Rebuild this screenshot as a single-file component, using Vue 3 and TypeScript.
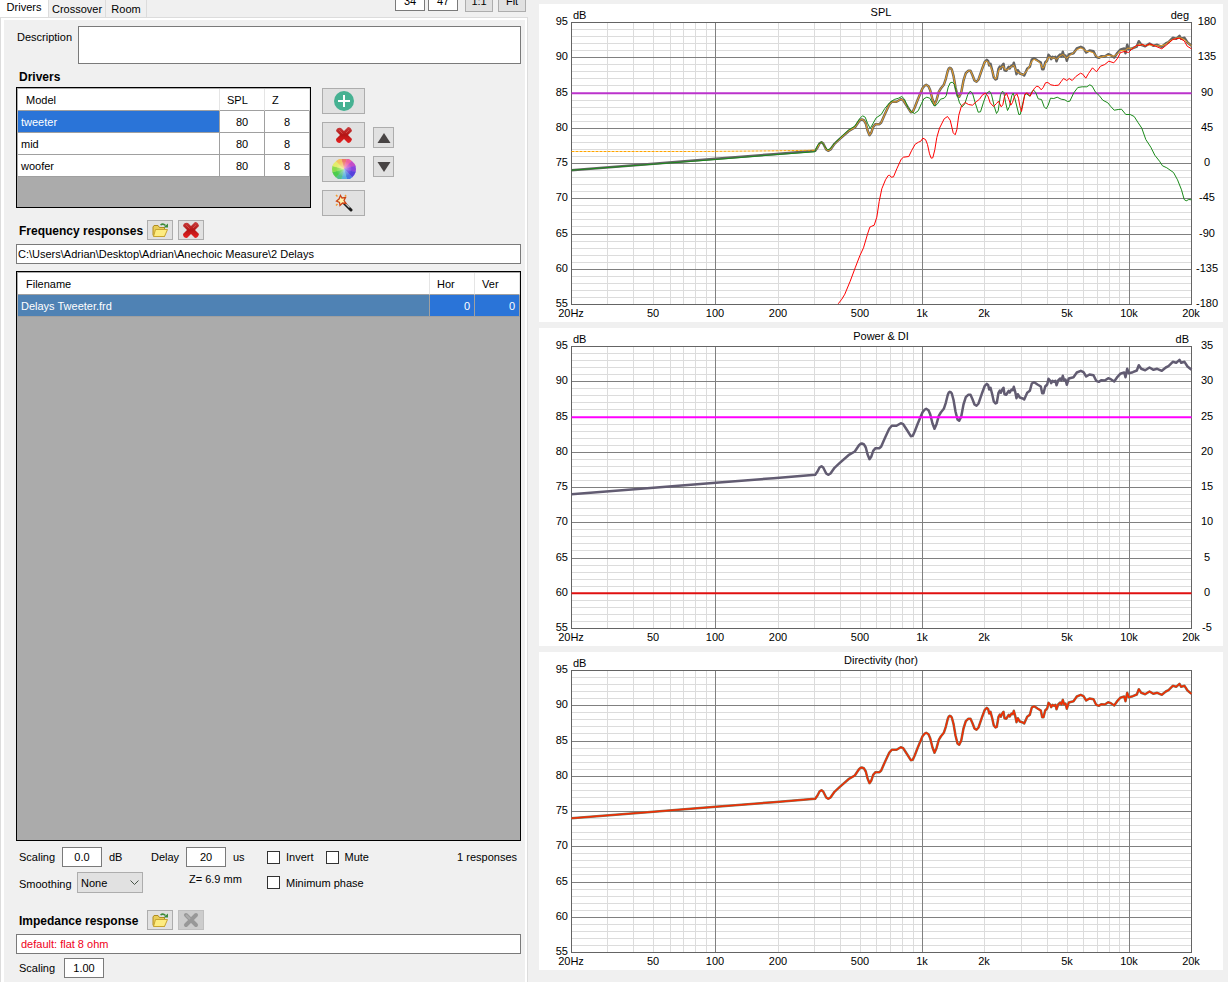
<script setup lang="ts">
import { computed, onBeforeUnmount, onMounted, ref } from 'vue'

interface Point { x: number; y: number }
interface Trace { points: Point[]; color: string; width: number; dash?: string }
interface Chart {
  title: string
  leftUnit: string
  rightUnit: string
  rightLabels: string[]
  traces: Trace[]
}

const tabs = ['Drivers', 'Crossover', 'Room']
const drivers = [
  { model: 'tweeter', spl: 80, z: 8 },
  { model: 'mid', spl: 80, z: 8 },
  { model: 'woofer', spl: 80, z: 8 },
]
const responses = [{ filename: 'Delays Tweeter.frd', hor: 0, ver: 0 }]

const selectedDriver = ref(0)
const zoomWidth = ref('34')
const zoomHeight = ref('47')
const description = ref('')
const folder = ref('C:\\Users\\Adrian\\Desktop\\Adrian\\Anechoic Measure\\2 Delays')
const scaling = ref('0.0')
const delay = ref('20')
const smoothing = ref('None')
const invert = ref(false)
const mute = ref(false)
const minimumPhase = ref(false)
const impedance = ref('default: flat 8 ohm')
const impedanceScaling = ref('1.00')

// Traces are sampled on a fixed raster that spans 20 Hz..20 kHz and 95..55 dB.
const RASTER_WIDTH = 1860
const RASTER_HEIGHT = 846

function samples(originX: number, originY: number, text: string): Point[] {
  return text.trim().split(/\s+/).map((pair) => {
    const [x, y] = pair.split(',').map(Number)
    return { x: (x + originX) / RASTER_WIDTH, y: (y - originY) / RASTER_HEIGHT }
  })
}

const level = (y: number): Point[] => [{ x: 0, y }, { x: 1, y }]

const rise = samples(626, 61, `
105,446 112,436 118,424 124,420 129,424 138,442 144,446 151,442 163,425 178,411 205,387 224,376
236,358 241,353 245,352 251,354 257,364 262,384 268,399 273,392 279,374 286,366 298,366 303,361
314,336 327,308 335,299 349,299 362,291 369,294 380,311 392,330 398,329 404,315 413,292 427,258
434,250 438,248 445,252 450,264 457,292 463,308 469,294 476,269 482,259 491,248 497,230 503,206
506,199 509,197 512,198 515,202 520,221 526,256 532,280 537,284 543,272 550,235 557,213 564,206
571,206 577,219 583,235 589,239 595,232 605,203 614,179 620,173 624,177 627,190 631,185 636,204
641,226 646,232 650,230 655,200 659,193 662,200 666,190 670,185 673,204 678,206 686,194 689,199
694,190 698,192 701,182 705,197 709,216 713,204 719,214 728,217 732,220 741,200 749,194 755,172
762,168 772,175 782,181 786,201 790,201 795,181 801,175 805,158 810,164 813,171 817,164 822,167
826,164 829,177 834,163 840,157 844,163 848,149 852,163 856,160 860,176 866,157 880,153 890,139
902,134 910,138 918,151 928,145 940,147 948,164 956,167 964,162 974,163 984,156 992,159 1002,166
1012,152 1020,143 1032,139 1036,153 1041,128 1046,141 1058,138 1070,133 1076,117 1083,128
1095,132 1108,124 1120,131 1131,128 1145,134 1157,124 1165,120 1178,107 1188,110 1198,101
1203,110 1213,107 1222,121 1234,131`)

const total: Point[] = [...samples(0, 0, '0,443 246,424 433,409 606,395'), ...rise]

// The smoothed sum drops the fine ripple above 2 kHz.
const rippleStart = 1245 / RASTER_WIDTH
const smoothed: Point[] = rise.map((p, i) => {
  if (p.x < rippleStart || i === rise.length - 1) return p
  return { x: p.x, y: (rise[i - 1].y + p.y * 2 + rise[i + 1].y) / 4 + 1 / RASTER_HEIGHT }
})
const flatBass = samples(0, 0, '0,387 400,387 620,385 731,383')

const midband: Point[] = [
  ...samples(0, 0, '0,443 246,425 433,411 606,397'),
  ...samples(686, 8, `
44,396 53,375 64,366 73,379 82,390 90,387 103,370 120,354 146,330 165,318 178,297 187,288 195,292
202,310 210,326 219,310 228,294 243,284 254,266 268,249 282,239 295,235 305,230 313,238 323,262
334,276 343,281 354,273 364,251 371,237 380,232 389,235 398,252 404,259 412,252 421,238 432,235
438,228 444,202 450,189 456,187 463,194 469,218 478,249 486,261 494,252 503,224 510,214 517,220
526,252 534,277 541,276 550,247 560,220 568,214 574,224 582,259 589,281 594,273 601,225 607,214
611,218 616,247 622,272 628,260 635,227 639,220 645,240 656,284`),
  ...samples(1226, 67, `
120,343 125,322 134,284 139,281 149,288 156,273 161,270 167,278 174,296 184,298 192,320 198,326
204,315 211,294 221,295 231,291 243,297 254,299 262,304 269,303 281,278 293,262 306,260 320,260
329,254 336,258 346,276 357,286 368,300 383,308 392,319 402,330 414,328 424,327 437,343 450,343
462,349 473,366 485,384 497,418 512,441 524,465 538,483 547,497 560,503 580,517 592,539 604,569
612,598 618,602 626,598 634,599`),
]

const treble: Point[] = [
  ...samples(686, 8, `
114,852 125,838 134,823 150,784 165,744 179,708 190,684 202,643 209,622 215,619 222,616 230,592
237,545 245,507 256,480 264,467 268,466 273,472 280,471 290,447 303,418 310,412 326,410 334,393
345,373 355,367 362,364 368,355 376,359 382,374 388,402 393,415 398,414 404,390 410,353 418,325
432,297 442,290 450,301 459,339 465,345 470,330 476,286 484,258 495,248 505,254 517,256 528,246
538,238 546,226 555,220 563,228 570,249 580,260 589,251 595,244 603,261 608,255 613,230 619,220
626,238 632,256 637,248 643,229 650,222 655,235 659,258`),
  ...samples(1226, 67, `
121,325 124,334 129,309 134,282 141,278 150,288 157,274 163,264 170,258 176,260 183,269 189,262
196,248 203,247 212,254 223,256 235,255 243,244 250,235 260,241 267,235 276,241 287,229 301,219
308,222 317,234 325,220 337,203 349,215 361,198 374,193 386,183 401,188 411,176 421,157 434,154
445,157 455,147 470,135 480,136 486,132 495,138 509,131 526,138 545,146 560,134 578,118 597,114
612,122 621,138 634,146`),
]

const charts: Chart[] = [
  {
    title: 'SPL', leftUnit: 'dB', rightUnit: 'deg',
    rightLabels: ['180', '135', '90', '45', '0', '-45', '-90', '-135', '-180'],
    traces: [
      { points: total, color: '#646464', width: 2.5 },
      { points: flatBass, color: '#ffa500', width: 1, dash: '3 1' },
      { points: smoothed, color: '#f0a020', width: 1 },
      { points: level(0.251), color: '#bb33cc', width: 2 },
      { points: midband, color: '#1a8a1a', width: 1 },
      { points: treble, color: '#ff0000', width: 1 },
    ],
  },
  {
    title: 'Power & DI', leftUnit: 'dB', rightUnit: 'dB',
    rightLabels: ['35', '30', '25', '20', '15', '10', '5', '0', '-5'],
    traces: [
      { points: total, color: '#625c72', width: 2.5 },
      { points: level(0.251), color: '#ff00ff', width: 2 },
      { points: level(0.875), color: '#e01010', width: 2 },
    ],
  },
  {
    title: 'Directivity (hor)', leftUnit: 'dB', rightUnit: '', rightLabels: [],
    traces: [
      { points: total, color: '#7c7860', width: 2.5 },
      { points: total, color: '#f42c00', width: 1.5 },
    ],
  },
]

const chartColumn = ref<HTMLElement | null>(null)
const panelWidth = ref(684)
const panelHeight = ref(318)
const GAP = 6
let observer: ResizeObserver | undefined

function measure() {
  const el = chartColumn.value
  if (!el) return
  panelWidth.value = Math.max(240, Math.floor(el.clientWidth))
  panelHeight.value = Math.max(160, Math.floor((el.clientHeight - GAP * 2) / 3))
}

onMounted(() => {
  measure()
  observer = new ResizeObserver(measure)
  if (chartColumn.value) observer.observe(chartColumn.value)
})
onBeforeUnmount(() => observer?.disconnect())

const left = 32
const top = 18
const plotWidth = computed(() => panelWidth.value - 64)
const plotHeight = computed(() => panelHeight.value - 36)
const right = computed(() => left + plotWidth.value)
const bottom = computed(() => top + plotHeight.value)

const freqX = (f: number) => left + Math.round((Math.log10(f / 20) / 3) * plotWidth.value)
const dbY = (db: number) => top + Math.round(((95 - db) / 40) * plotHeight.value)

const minorGrid = computed(() => {
  let d = ''
  for (const decade of [10, 100, 1000, 10000]) {
    for (let n = 2; n < 10; n++) {
      const f = n * decade
      if (f > 20 && f < 20000) d += `M${freqX(f) + 0.5} ${top}V${bottom.value}`
    }
  }
  for (let db = 56; db < 95; db++) {
    if (db % 5) d += `M${left} ${dbY(db) + 0.5}H${right.value}`
  }
  return d
})
const majorGrid = computed(() => {
  let d = ''
  for (const f of [100, 1000, 10000]) d += `M${freqX(f) + 0.5} ${top}V${bottom.value}`
  for (let db = 60; db < 95; db += 5) d += `M${left} ${dbY(db) + 0.5}H${right.value}`
  return d
})
const levels = [95, 90, 85, 80, 75, 70, 65, 60, 55]
const frequencies = [
  { f: 20, text: '20Hz' }, { f: 50, text: '50' }, { f: 100, text: '100' }, { f: 200, text: '200' },
  { f: 500, text: '500' }, { f: 1000, text: '1k' }, { f: 2000, text: '2k' }, { f: 5000, text: '5k' },
  { f: 10000, text: '10k' }, { f: 20000, text: '20k' },
]

function line(points: Point[]) {
  return points
    .map((p) => `${(left + 0.5 + p.x * plotWidth.value).toFixed(1)},${(top + 0.5 + p.y * plotHeight.value).toFixed(1)}`)
    .join(' ')
}

const wheelColors = [
  '#ee7a68', '#ee62a0', '#c44cc8', '#8a44dc', '#5640dc', '#4a78e0',
  '#58b4dc', '#54c08c', '#4ccc4c', '#8cdc4c', '#e4ec6c', '#f4c460',
]
const wheel = wheelColors.map((color, i) => {
  const a = ((i * 30 - 105) * Math.PI) / 180
  const b = ((i * 30 - 75) * Math.PI) / 180
  return {
    color,
    d: `M12 11L${12 + 13 * Math.cos(a)} ${11 + 13 * Math.sin(a)}L${12 + 13 * Math.cos(b)} ${11 + 13 * Math.sin(b)}Z`,
  }
})
</script>

<template>
  <main class="app">
    <section class="editor">
      <header class="topbar">
        <nav class="tabs" role="tablist" aria-label="Sections">
          <button
            v-for="(tab, i) in tabs" :key="tab" type="button" role="tab" class="tab"
            :class="{ active: i === 0 }" :aria-selected="i === 0"
          >{{ tab }}</button>
        </nav>
        <div class="view-tools">
          <input v-model="zoomWidth" class="number small" aria-label="Horizontal view size">
          <input v-model="zoomHeight" class="number small" aria-label="Vertical view size">
          <button type="button" class="button view-button">1:1</button>
          <button type="button" class="button view-button">Fit</button>
        </div>
      </header>

      <div class="page">
        <div class="description">
          <label for="description">Description</label>
          <textarea id="description" v-model="description"></textarea>
        </div>

        <h2 class="heading drivers-heading">Drivers</h2>
        <div class="drivers">
          <div class="grid-box drivers-box">
            <table class="grid">
              <colgroup><col><col class="num-col"><col class="num-col"></colgroup>
              <thead><tr><th>Model</th><th>SPL</th><th>Z</th></tr></thead>
              <tbody>
                <tr v-for="(d, i) in drivers" :key="d.model" @click="selectedDriver = i">
                  <td :class="{ selected: i === selectedDriver }">{{ d.model }}</td>
                  <td class="center">{{ d.spl }}</td>
                  <td class="center">{{ d.z }}</td>
                </tr>
              </tbody>
            </table>
          </div>
          <div class="tools">
            <button type="button" class="button tool" aria-label="Add driver">
              <svg width="20" height="20" viewBox="0 0 20 20">
                <circle cx="10" cy="10" r="10" fill="#46b192" />
                <path d="M4 10H16M10 4V16" stroke="#fff" stroke-width="2" />
              </svg>
            </button>
            <button type="button" class="button tool" aria-label="Remove driver">
              <svg width="16" height="16" viewBox="0 0 16 16"><use href="#cross" /></svg>
            </button>
            <button type="button" class="button tool" aria-label="Driver colour">
              <svg width="24" height="22" viewBox="0 0 24 22">
                <defs>
                  <clipPath id="wheel-clip"><path d="M7 1H17Q24 5 24 11Q24 17 18 21H6Q0 17 0 11Q0 5 7 1Z" /></clipPath>
                  <radialGradient id="wheel-light"><stop offset="0" stop-color="#fff" stop-opacity=".5" /><stop offset="1" stop-color="#fff" stop-opacity="0" /></radialGradient>
                </defs>
                <g clip-path="url(#wheel-clip)">
                  <path v-for="s in wheel" :key="s.color" :d="s.d" :fill="s.color" :stroke="s.color" stroke-width=".5" />
                  <circle cx="12" cy="11" r="8" fill="url(#wheel-light)" />
                </g>
              </svg>
            </button>
            <button type="button" class="button tool" aria-label="Driver wizard">
              <svg width="18" height="18" viewBox="0 0 18 18">
                <path d="M8 8L16 16" stroke="#1c1c1c" stroke-width="3" stroke-linecap="round" />
                <path d="M9 8L14.500 13.500" stroke="#c4c4c4" stroke-width="1.200" />
                <path d="M5.500 1.500L7 4L10.500 3.500L9 6.500L11 9.500L7.500 9L5 11.500L4.500 8.500L1.500 7L4 5Z" fill="#fff4b0" stroke="#cc4418" stroke-width="1.300" />
                <path d="M1 1l1.500 1.500M11 1l-1 1.500M1 11.500l1.500-1.500" stroke="#f09a30" stroke-width="1.500" />
              </svg>
            </button>
          </div>
          <div class="movers">
            <button type="button" class="button mover" aria-label="Move up">
              <svg width="14" height="12" viewBox="0 0 14 12"><path d="M7 1L13.500 11H.5Z" fill="#484444" /></svg>
            </button>
            <button type="button" class="button mover" aria-label="Move down">
              <svg width="14" height="12" viewBox="0 0 14 12"><path d="M.5 1H13.500L7 11Z" fill="#484444" /></svg>
            </button>
          </div>
        </div>

        <div class="section-head">
          <h2 class="heading">Frequency responses</h2>
          <button type="button" class="button file" aria-label="Open responses">
            <svg width="17" height="15" viewBox="0 0 17 15"><use href="#folder" /></svg>
          </button>
          <button type="button" class="button file" aria-label="Remove responses">
            <svg width="16" height="16" viewBox="0 0 16 16"><use href="#cross" /></svg>
          </button>
        </div>
        <input v-model="folder" class="text-line" aria-label="Response folder">

        <div class="grid-box responses-box">
          <table class="grid">
            <colgroup><col><col class="num-col"><col class="num-col"></colgroup>
            <thead><tr><th>Filename</th><th>Hor</th><th>Ver</th></tr></thead>
            <tbody>
              <tr v-for="r in responses" :key="r.filename">
                <td class="file-cell">{{ r.filename }}</td>
                <td class="selected end">{{ r.hor }}</td>
                <td class="selected end">{{ r.ver }}</td>
              </tr>
            </tbody>
          </table>
        </div>

        <div class="controls">
          <div class="group-a">
            <label class="scaling-label" for="scaling">Scaling</label>
            <input id="scaling" v-model="scaling" class="number">
            <span class="unit">dB</span>
          </div>
          <div class="group-b">
            <label class="delay-label" for="delay">Delay</label>
            <input id="delay" v-model="delay" class="number">
            <span class="unit">us</span>
          </div>
          <div class="group-c">
            <label class="check"><input v-model="invert" type="checkbox">Invert</label>
            <label class="check"><input v-model="mute" type="checkbox">Mute</label>
          </div>
          <span class="count">1 responses</span>
        </div>
        <div class="controls second">
          <div class="group-a">
            <label class="smoothing-label" for="smoothing">Smoothing</label>
            <span class="select">
              <select id="smoothing" v-model="smoothing"><option>None</option><option>1/12</option><option>1/6</option></select>
              <svg width="9" height="6" viewBox="0 0 9 6"><path d="M.5 .5L4.500 4.500L8.500 .5" fill="none" stroke="#485448" /></svg>
            </span>
          </div>
          <div class="group-b offset">Z= 6.9 mm</div>
          <div class="group-c">
            <label class="check"><input v-model="minimumPhase" type="checkbox">Minimum phase</label>
          </div>
        </div>

        <div class="section-head">
          <h2 class="heading">Impedance response</h2>
          <button type="button" class="button file" aria-label="Open impedance">
            <svg width="17" height="15" viewBox="0 0 17 15"><use href="#folder" /></svg>
          </button>
          <button type="button" class="button file" aria-label="Remove impedance" disabled>
            <svg width="16" height="16" viewBox="0 0 16 16">
              <path d="M3 3L13 13M13 3L3 13" stroke="#989898" stroke-width="4" stroke-linecap="round" />
              <path d="M3 3L7 7" stroke="#acacac" stroke-width="2" />
            </svg>
          </button>
        </div>
        <input v-model="impedance" class="text-line warning" aria-label="Impedance file">
        <div class="impedance-scale">
          <label for="impedance-scaling">Scaling</label>
          <input id="impedance-scaling" v-model="impedanceScaling" class="number">
        </div>
      </div>
    </section>

    <section ref="chartColumn" class="charts">
      <svg
        v-for="chart in charts" :key="chart.title" class="chart" role="img" :aria-label="chart.title"
        :width="panelWidth" :height="panelHeight"
      >
        <path class="minor" :d="minorGrid" />
        <path class="major" :d="majorGrid" />
        <rect class="frame" :x="left + 0.5" :y="top + 0.5" :width="plotWidth" :height="plotHeight" />
        <polyline
          v-for="(t, i) in chart.traces" :key="i" class="trace" :points="line(t.points)"
          :stroke="t.color" :stroke-width="t.width" :stroke-dasharray="t.dash"
        />
        <text :x="panelWidth / 2" y="12" text-anchor="middle">{{ chart.title }}</text>
        <text :x="left + 2" :y="top - 3">{{ chart.leftUnit }}</text>
        <text :x="right - 2" :y="top - 3" text-anchor="end">{{ chart.rightUnit }}</text>
        <text v-for="db in levels" :key="db" :x="left - 3" :y="dbY(db) + 3" text-anchor="end">{{ db }}</text>
        <text
          v-for="(label, i) in chart.rightLabels" :key="label" :x="right + 16" :y="dbY(levels[i]) + 3"
          text-anchor="middle"
        >{{ label }}</text>
        <text
          v-for="tick in frequencies" :key="tick.f" :x="freqX(tick.f)" :y="bottom + 13" text-anchor="middle"
        >{{ tick.text }}</text>
      </svg>
    </section>

    <svg class="symbols" aria-hidden="true">
      <defs>
        <linearGradient id="red" x1="0" y1="0" x2="0" y2="1">
          <stop offset="0" stop-color="#c84040" /><stop offset=".5" stop-color="#b41414" /><stop offset="1" stop-color="#e82020" />
        </linearGradient>
      </defs>
      <symbol id="cross" viewBox="0 0 16 16">
        <path d="M0 4Q1 0 5 1L8 4L12 0Q15 0 16 4L12 8L16 12Q15 16 12 16L8 12L4 16Q0 16 0 12L4 8Z" fill="url(#red)" />
        <path d="M3 3L6.500 6.500M13 3L10 6" stroke="#d04c48" stroke-width="1" fill="none" />
      </symbol>
      <symbol id="folder" viewBox="0 0 17 15">
        <path d="M1 4L2 2.500H6L7.500 4.500H12.500V13.500H2L1 12Z" fill="#e8cc58" stroke="#b08c20" />
        <path d="M3.500 6.500H15.500L12.500 13.500H1.500Z" fill="#fdec80" stroke="#c8a430" />
        <path d="M8.500 2Q11 0 13.500 2.500" fill="none" stroke="#3c8c3c" stroke-width="1.500" />
        <path d="M16 .5V4.500H11.500Z" fill="#3c8c3c" />
      </symbol>
    </svg>
  </main>
</template>

<style>
html,
body {
  background: #f0f0f0;
}
</style>

<style scoped>
.app {
  display: grid;
  grid-template-columns: minmax(528px, 43%) minmax(0, 1fr);
  height: 100vh;
  min-height: 640px;
  overflow: hidden;
  background: #f0f0f0;
  color: #000;
  font: 11px/14px "Liberation Sans", Arial, sans-serif;
}
.app * {
  box-sizing: border-box;
}
button,
input,
select,
textarea {
  margin: 0;
  padding: 0;
  border-radius: 0;
  color: inherit;
  font: inherit;
}
.editor {
  display: flex;
  flex-direction: column;
  min-height: 0;
}
.topbar {
  display: flex;
  justify-content: space-between;
  align-items: flex-end;
  flex: none;
  height: 17px;
  overflow: hidden;
}
.tabs {
  display: flex;
  align-items: flex-end;
  height: 17px;
}
.tab {
  width: 57px;
  height: 17px;
  border: 0;
  border-right: 1px solid #dcdcdc;
  background: #f0f0f0;
  text-align: center;
}
.tab:last-child {
  width: 41px;
}
.tab.active {
  width: 49px;
  padding-bottom: 4px;
  background: #fff;
}
.view-tools {
  display: flex;
  gap: 3px;
  align-items: flex-end;
  padding: 0 2px 5px 0;
}
.number {
  width: 40px;
  height: 20px;
  border: 1px solid #7a7a7a;
  background: #fff;
  text-align: center;
}
.number.small {
  width: 30px;
  margin-bottom: 1px;
}
.button {
  display: flex;
  align-items: center;
  justify-content: center;
  border: 1px solid #adadad;
  background: #e1e1e1;
}
.button:disabled {
  border-color: #bfbfbf;
  background: #cccccc;
}
.view-button {
  width: 28px;
  height: 22px;
}
.number + .view-button {
  margin: 0 2px 0 4px;
}
.page {
  display: flex;
  flex: 1;
  flex-direction: column;
  min-height: 0;
  padding: 8px 6px 4px 15px;
  border: 1px solid #dcdcdc;
  border-bottom: 0;
  box-shadow: inset 3px 2px #fff, inset -2px 0 #fff;
}
.description {
  display: flex;
  flex: none;
}
.description label {
  width: 62px;
  padding: 4px 0 0 1px;
}
.description textarea {
  flex: 1;
  height: 38px;
  border: 1px solid #7a7a7a;
  background: #fff;
  resize: none;
}
.heading {
  margin: 0;
  font-size: 12px;
  font-weight: bold;
}
.drivers-heading {
  height: 23px;
  padding: 6px 0 0 3px;
}
.drivers {
  display: flex;
  flex: none;
  align-items: flex-start;
}
.grid-box {
  padding: 1px 0 0 1px;
  border: 1px solid #000;
  background: #ababab;
}
.drivers-box {
  width: 295px;
  height: 121px;
}
.grid {
  width: 100%;
  border-spacing: 0;
  table-layout: fixed;
}
.num-col {
  width: 45px;
}
.grid th,
.grid td {
  height: 22px;
  padding: 0 3px;
  border-right: 1px solid #a0a0a0;
  border-bottom: 1px solid #a0a0a0;
  background: #fff;
  text-align: left;
}
.grid th {
  padding: 0 7px;
  border-right-color: #e5e5e5;
  font-weight: normal;
}
.grid th:first-child {
  padding-left: 8px;
}
.grid td.center {
  text-align: center;
}
.grid td.end {
  padding-right: 4px;
  text-align: right;
}
.grid td.selected {
  background: #2a74d8;
  color: #fff;
}
.grid td.file-cell {
  background: #4f82b4;
  color: #fff;
}
.tools {
  display: flex;
  flex-direction: column;
  gap: 8px;
  padding: 1px 8px 0 11px;
}
.tool {
  width: 43px;
  height: 26px;
}
.movers {
  display: flex;
  flex-direction: column;
  gap: 8px;
  padding-top: 40px;
}
.mover {
  width: 21px;
  height: 21px;
}
.section-head {
  display: flex;
  flex: none;
  gap: 5px;
  align-items: center;
  margin: 4px 0;
}
.section-head .heading {
  width: 126px;
  padding: 2px 0 0 3px;
  white-space: nowrap;
}
.file {
  width: 26px;
  height: 20px;
}
.text-line {
  flex: none;
  width: 100%;
  height: 20px;
  padding: 0 1px;
  border: 1px solid #7a7a7a;
  background: #fff;
}
.text-line.warning {
  padding: 0 4px;
  color: #f00020;
}
.responses-box {
  flex: 1;
  min-height: 60px;
  margin: 7px 0 6px;
}
.controls {
  display: flex;
  flex: none;
  align-items: center;
  height: 20px;
  padding: 0 4px 0 3px;
}
.controls.second {
  height: 21px;
  margin: 5px 0 13px;
}
.group-a,
.group-b,
.group-c {
  display: flex;
  align-items: center;
}
.group-a {
  width: 132px;
}
.group-b {
  width: 116px;
}
.group-c {
  gap: 12px;
}
.group-b.offset {
  align-self: flex-start;
  padding-left: 38px;
}
.scaling-label {
  width: 43px;
}
.delay-label {
  width: 35px;
}
.smoothing-label {
  width: 58px;
  padding-top: 2px;
}
.unit {
  padding-left: 7px;
}
.count {
  margin-left: auto;
}
.check {
  display: flex;
  gap: 6px;
  align-items: center;
}
.check input {
  width: 13px;
  height: 13px;
  border: 1px solid #333;
  background: #fff;
  appearance: none;
}
.check input:checked {
  box-shadow: inset 0 0 0 2px #fff;
  background: #333;
}
.select {
  position: relative;
}
.select select {
  display: block;
  width: 66px;
  height: 21px;
  padding: 0 3px;
  border: 1px solid #adadad;
  background: #e1e1e1;
  appearance: none;
}
.select svg {
  position: absolute;
  top: 8px;
  right: 4px;
  pointer-events: none;
}
.impedance-scale {
  display: flex;
  flex: none;
  align-items: center;
  margin-top: 4px;
  padding-left: 3px;
}
.impedance-scale label {
  width: 45px;
}
.charts {
  display: flex;
  flex-direction: column;
  gap: 6px;
  min-width: 0;
  min-height: 0;
  margin: 4px 5px 11px 11px;
}
.chart {
  display: block;
  flex: none;
  background: #fff;
}
.chart text {
  fill: #000;
}
.chart path,
.frame,
.trace {
  fill: none;
}
.minor {
  stroke: #dcdcdc;
}
.major {
  stroke: #808080;
}
.frame {
  stroke: #646464;
}
.trace {
  stroke-linejoin: round;
}
.symbols {
  position: absolute;
  width: 0;
  height: 0;
}
</style>
